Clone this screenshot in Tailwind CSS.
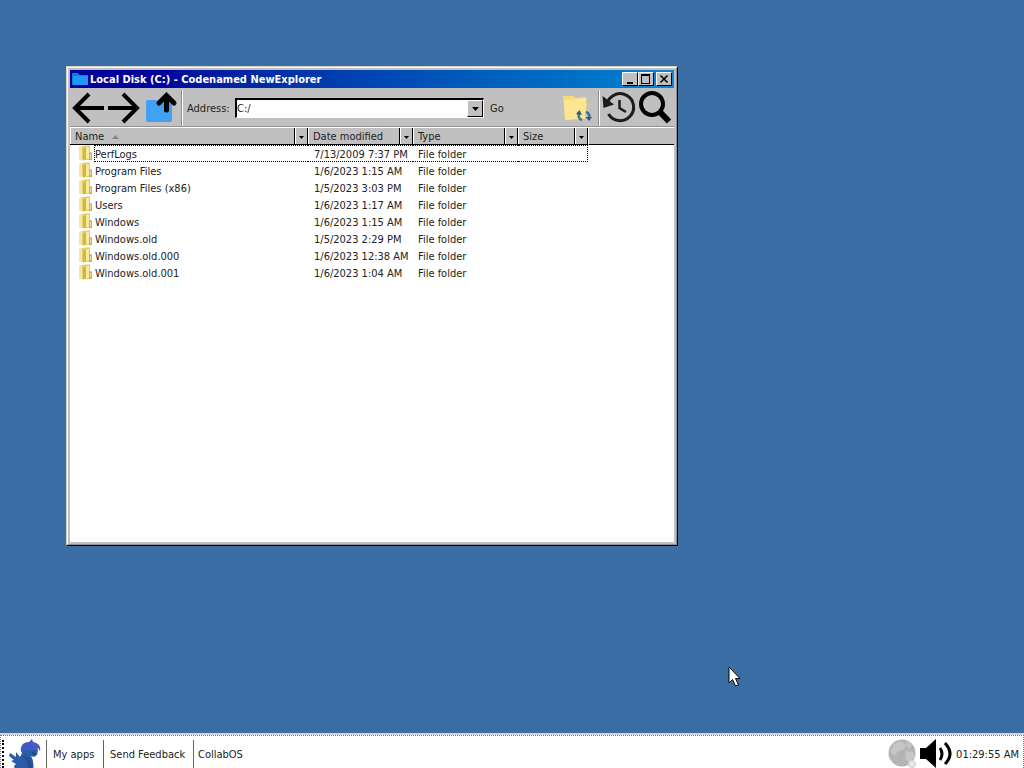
<!DOCTYPE html>
<html lang="en">
<head>
    <meta charset="UTF-8">
    <meta name="viewport" content="width=device-width, initial-scale=1.0">
    <title>Local Disk (C:) - Codenamed NewExplorer</title>
    <script src="https://cdn.jsdelivr.net/npm/@tailwindcss/browser@4"></script>
</head>
<body class="flex flex-col h-screen overflow-hidden bg-[#3a6ea5] font-['DejaVu_Sans_Condensed','DejaVu_Sans',sans-serif] text-[11px] leading-4 text-[#222]">

    <!-- Shared icons -->
    <svg class="hidden">
        <symbol id="folder" viewBox="0 0 16 16">
            <path d="M1 2l6-1.500h5V7l2 1v7H7l-6-.5z" fill="#e4ce68"/>
            <path d="M1 2l3-.8v13.500L1 14.500z" fill="#f1e7a6"/>
            <path d="M8 2h3v12H8z" fill="#f4eaa8"/>
            <path d="M5 4l3-2v12l-3 2z" fill="#d4b73c"/>
            <path d="M11 7.500h3V15h-3z" fill="#d0b24a"/>
            <path d="M12 9h1v4h-1z" fill="#efe09a"/>
        </symbol>
        <symbol id="caret" viewBox="0 0 7 4">
            <path d="M0 0h7L3.500 4z" fill="#000"/>
        </symbol>
    </svg>

    <!-- Desktop -->
    <main class="relative flex-1 min-h-0">

        <!-- Explorer window -->
        <section class="absolute left-[66px] top-[66px] w-[612px] h-[480px] border border-t-[#d4d0c8] border-l-[#d4d0c8] border-r-black border-b-black bg-[#c0c0c0]">
            <div class="flex flex-col h-full border border-t-white border-l-white border-r-[#909090] border-b-[#909090] p-[2px]">

                <!-- Title bar -->
                <header class="flex items-center h-[18px] shrink-0 px-[2px] bg-linear-to-r from-[#00009c] from-15% to-[#1084d0] text-white">
                    <svg class="w-4 h-4 mr-[2px]" viewBox="0 0 16 16">
                        <path d="M0 2h6l2 2h8v10H0z" fill="#1178dc"/>
                        <path d="M1 5h15v9H1z" fill="#2196f3"/>
                    </svg>
                    <h1 class="flex-1 pt-[2px] font-bold whitespace-nowrap">Local Disk (C:) - Codenamed NewExplorer</h1>
                    <button aria-label="Minimize" class="w-4 h-[14px] bg-[#c0c0c0] border border-t-white border-l-white border-r-black border-b-black">
                        <svg class="w-[14px] h-3" viewBox="0 0 14 12"><path d="M4 9h6v2H4z"/></svg>
                    </button>
                    <button aria-label="Maximize" class="w-4 h-[14px] bg-[#c0c0c0] border border-t-white border-l-white border-r-black border-b-black">
                        <svg class="w-[14px] h-3" viewBox="0 0 14 12"><path d="M2 1h9v10H2zM3 3v7h7V3z" fill-rule="evenodd"/></svg>
                    </button>
                    <button aria-label="Close" class="w-4 h-[14px] ml-[2px] bg-[#c0c0c0] border border-t-white border-l-white border-r-black border-b-black">
                        <svg class="w-[14px] h-3" viewBox="0 0 14 12"><path d="M3.500 2.500l7 7M10.500 2.500l-7 7" stroke="#000" stroke-width="1.600"/></svg>
                    </button>
                </header>

                <!-- Toolbar -->
                <div class="flex items-center h-[39px] pt-[2px] shrink-0 border-b border-[#909090]">
                    <button aria-label="Back" class="w-9 h-9 pl-[2px]">
                        <svg class="w-[34px] h-9" viewBox="0 0 34 36" fill="none" stroke="#000" stroke-width="4"><path d="M17 4L3 18l14 14M3 18h29"/></svg>
                    </button>
                    <button aria-label="Forward" class="w-9 h-9">
                        <svg class="w-[34px] h-9" viewBox="0 0 34 36" fill="none" stroke="#000" stroke-width="4"><path d="M17 4l14 14-14 14M31 18H2"/></svg>
                    </button>
                    <button aria-label="Up one level" class="w-9 h-9 ml-[2px]">
                        <svg class="w-9 h-9" viewBox="0 0 36 36">
                            <path d="M2 12q0-2 2-2h8l3 2h13v18q0 2-2 2H4q-2 0-2-2z" fill="#42a0f5"/>
                            <path d="M15 13l7.500-7.500L30 13M22.500 6v14" fill="none" stroke="#000" stroke-width="5" stroke-linecap="round"/>
                        </svg>
                    </button>
                    <div class="w-[2px] h-9 ml-[1px] border-l border-l-[#909090] border-r border-r-white"></div>
                    <label for="address" class="ml-1 w-12 pt-[1px] whitespace-nowrap">Address:</label>
                    <div class="flex w-[249px] h-5 bg-white border-t-2 border-l-2 border-t-black border-l-black border-r border-b border-r-white border-b-white">
                        <input id="address" type="text" value="C:/" class="flex-1 min-w-0 outline-none">
                        <button aria-label="Show addresses" class="flex items-center justify-center w-4 bg-[#c0c0c0] border border-t-white border-l-white border-r-black border-b-black">
                            <svg class="w-[7px] h-1"><use href="#caret"/></svg>
                        </button>
                    </div>
                    <button class="ml-[6px] pt-[1px]">Go</button>
                    <button aria-label="Refresh" class="w-8 h-8 ml-auto mr-[6px]">
                        <svg class="w-8 h-8" viewBox="0 0 32 32">
                            <path d="M3 4h11l2 2 10-1 1 8-2 14-20 1z" fill="#f3dc78"/>
                            <path d="M4 8l22-2-1 20-20 2z" fill="#fae694"/>
                            <path d="M22 28c-3-1-4-4-3-7M26 20c3 1 4 4 3 6" fill="none" stroke="#3d6c96" stroke-width="2.500"/>
                            <path d="M16 22l3.500-4 2.500 5zM32 25l-3 4-3.500-4z" fill="#2d5c8a"/>
                        </svg>
                    </button>
                    <div class="w-[2px] h-9 border-l border-l-[#909090] border-r border-r-white"></div>
                    <button aria-label="History" class="w-9 h-9 ml-[2px]">
                        <svg class="w-9 h-9" viewBox="0 0 36 36" fill="none" stroke="#1c1c1c">
                            <path d="M5 14A13.500 13.500 0 1 1 6.500 24" stroke-width="3"/>
                            <path d="M.5 6l1 12L12 14.500z" fill="#1c1c1c" stroke="none"/>
                            <path d="M17.500 10v8l6.500 4" stroke-width="2.500"/>
                        </svg>
                    </button>
                    <button aria-label="Search" class="w-9 h-9">
                        <svg class="w-9 h-9" viewBox="0 0 36 36" fill="none" stroke="#000">
                            <circle cx="14" cy="14" r="11" stroke-width="4"/>
                            <path d="M21 21L31 31.500" stroke-width="6"/>
                        </svg>
                    </button>
                </div>

                <!-- File list -->
                <div class="flex-1 min-h-0 bg-white">
                    <table class="w-full table-fixed border-collapse text-left whitespace-nowrap">
                        <colgroup>
                            <col class="w-[238px]">
                            <col class="w-[105px]">
                            <col class="w-[105px]">
                            <col class="w-[70px]">
                            <col>
                        </colgroup>
                        <thead class="bg-[#c0c0c0]">
                            <tr class="h-[18px]">
                                <th class="p-0 font-normal">
                                    <div class="flex h-[18px] border-t border-t-white border-b border-b-black">
                                        <span class="flex flex-1 items-center gap-2 pl-1 pt-[2px] border-l border-l-white border-r border-r-black">Name
                                            <svg class="w-[7px] h-1" viewBox="0 0 7 4"><path d="M0 4h7L3.500 0z" fill="#888"/></svg>
                                        </span>
                                        <button aria-label="Filter by name" class="flex items-center justify-center w-[13px] pt-[2px] border-l border-l-white border-r border-r-black"><svg class="w-[5px] h-[3px]"><use href="#caret"/></svg></button>
                                    </div>
                                </th>
                                <th class="p-0 font-normal">
                                    <div class="flex h-[18px] border-t border-t-white border-b border-b-black">
                                        <span class="flex flex-1 items-center pl-1 pt-[2px] border-l border-l-white border-r border-r-black">Date modified</span>
                                        <button aria-label="Filter by date" class="flex items-center justify-center w-[13px] pt-[2px] border-l border-l-white border-r border-r-black"><svg class="w-[5px] h-[3px]"><use href="#caret"/></svg></button>
                                    </div>
                                </th>
                                <th class="p-0 font-normal">
                                    <div class="flex h-[18px] border-t border-t-white border-b border-b-black">
                                        <span class="flex flex-1 items-center pl-1 pt-[2px] border-l border-l-white border-r border-r-black">Type</span>
                                        <button aria-label="Filter by type" class="flex items-center justify-center w-[13px] pt-[2px] border-l border-l-white border-r border-r-black"><svg class="w-[5px] h-[3px]"><use href="#caret"/></svg></button>
                                    </div>
                                </th>
                                <th class="p-0 font-normal">
                                    <div class="flex h-[18px] border-t border-t-white border-b border-b-black">
                                        <span class="flex flex-1 items-center pl-1 pt-[2px] border-l border-l-white border-r border-r-black">Size</span>
                                        <button aria-label="Filter by size" class="flex items-center justify-center w-[13px] pt-[2px] border-l border-l-white border-r border-r-black"><svg class="w-[5px] h-[3px]"><use href="#caret"/></svg></button>
                                    </div>
                                </th>
                                <td class="p-0"><div class="h-[18px] border-t border-t-white border-l border-l-white border-b border-b-black"></div></td>
                            </tr>
                        </thead>
                        <tbody class="leading-[17px]">
                            <tr class="h-[17px]">
                                <td class="p-0 pl-2"><div class="flex h-[17px]"><svg class="w-4 h-4"><use href="#folder"/></svg><span class="flex-1 h-[17px] border-y border-l border-dotted border-black">PerfLogs</span></div></td>
                                <td class="p-0"><div class="h-[17px] pl-[6px] border-y border-dotted border-black">7/13/2009 7:37 PM</div></td>
                                <td class="p-0"><div class="h-[17px] pl-[5px] border-y border-dotted border-black">File folder</div></td>
                                <td class="p-0"><div class="h-[17px] border-y border-r border-dotted border-black"></div></td>
                                <td></td>
                            </tr>
                            <tr class="h-[17px]">
                                <td class="p-0 pl-2"><div class="flex h-[17px] leading-[19px]"><svg class="w-4 h-4 mr-[1px]"><use href="#folder"/></svg>Program Files</div></td>
                                <td class="p-0 pl-[6px]"><div class="h-[17px] leading-[19px]">1/6/2023 1:15 AM</div></td>
                                <td class="p-0 pl-[5px]"><div class="h-[17px] leading-[19px]">File folder</div></td>
                                <td></td><td></td>
                            </tr>
                            <tr class="h-[17px]">
                                <td class="p-0 pl-2"><div class="flex h-[17px] leading-[19px]"><svg class="w-4 h-4 mr-[1px]"><use href="#folder"/></svg>Program Files (x86)</div></td>
                                <td class="p-0 pl-[6px]"><div class="h-[17px] leading-[19px]">1/5/2023 3:03 PM</div></td>
                                <td class="p-0 pl-[5px]"><div class="h-[17px] leading-[19px]">File folder</div></td>
                                <td></td><td></td>
                            </tr>
                            <tr class="h-[17px]">
                                <td class="p-0 pl-2"><div class="flex h-[17px] leading-[19px]"><svg class="w-4 h-4 mr-[1px]"><use href="#folder"/></svg>Users</div></td>
                                <td class="p-0 pl-[6px]"><div class="h-[17px] leading-[19px]">1/6/2023 1:17 AM</div></td>
                                <td class="p-0 pl-[5px]"><div class="h-[17px] leading-[19px]">File folder</div></td>
                                <td></td><td></td>
                            </tr>
                            <tr class="h-[17px]">
                                <td class="p-0 pl-2"><div class="flex h-[17px] leading-[19px]"><svg class="w-4 h-4 mr-[1px]"><use href="#folder"/></svg>Windows</div></td>
                                <td class="p-0 pl-[6px]"><div class="h-[17px] leading-[19px]">1/6/2023 1:15 AM</div></td>
                                <td class="p-0 pl-[5px]"><div class="h-[17px] leading-[19px]">File folder</div></td>
                                <td></td><td></td>
                            </tr>
                            <tr class="h-[17px]">
                                <td class="p-0 pl-2"><div class="flex h-[17px] leading-[19px]"><svg class="w-4 h-4 mr-[1px]"><use href="#folder"/></svg>Windows.old</div></td>
                                <td class="p-0 pl-[6px]"><div class="h-[17px] leading-[19px]">1/5/2023 2:29 PM</div></td>
                                <td class="p-0 pl-[5px]"><div class="h-[17px] leading-[19px]">File folder</div></td>
                                <td></td><td></td>
                            </tr>
                            <tr class="h-[17px]">
                                <td class="p-0 pl-2"><div class="flex h-[17px] leading-[19px]"><svg class="w-4 h-4 mr-[1px]"><use href="#folder"/></svg>Windows.old.000</div></td>
                                <td class="p-0 pl-[6px]"><div class="h-[17px] leading-[19px]">1/6/2023 12:38 AM</div></td>
                                <td class="p-0 pl-[5px]"><div class="h-[17px] leading-[19px]">File folder</div></td>
                                <td></td><td></td>
                            </tr>
                            <tr class="h-[17px]">
                                <td class="p-0 pl-2"><div class="flex h-[17px] leading-[19px]"><svg class="w-4 h-4 mr-[1px]"><use href="#folder"/></svg>Windows.old.001</div></td>
                                <td class="p-0 pl-[6px]"><div class="h-[17px] leading-[19px]">1/6/2023 1:04 AM</div></td>
                                <td class="p-0 pl-[5px]"><div class="h-[17px] leading-[19px]">File folder</div></td>
                                <td></td><td></td>
                            </tr>
                        </tbody>
                    </table>
                </div>
            </div>
        </section>

        <!-- Mouse pointer -->
        <svg class="absolute left-[728px] top-[666px] w-[14px] h-[22px]" viewBox="0 0 14 22">
            <path d="M1 1v16l3.500-3.500L7.500 20l3-1.200-3-6.300H12z" fill="#fff" stroke="#000"/>
        </svg>
    </main>

    <!-- Taskbar -->
    <footer class="h-[35px] shrink-0 border-t-2 border-t-[#d0d4dc] bg-white">
        <div class="flex items-center h-full pt-1 border-t border-x border-dotted border-[#777]">
            <div class="h-7 ml-[1px] border-l-2 border-dotted border-black"></div>
            <button aria-label="Start" class="w-[34px] h-8 ml-[5px] mr-[3px]">
                <svg class="w-[34px] h-8" viewBox="0 0 34 32">
                    <path d="M6 32l-1-4 2-2-5-3 3-1-5-4 1-3 6 4v-5l4 5 2-4c-1-4 0-7 3-9h9l4 6-1 5-3 2-3-1c2 3 3 8 2 14z" fill="#2a5ca8"/>
                    <path d="M12 14c-1-6 2-10 8-10l3-3 1 3c5 1 8 4 7 9l-2-3c-1 2-3 3-5 2-4-1-7 1-12 2z" fill="#3f5cc0"/>
                    <path d="M24 4c5 1 8 4 7 9-1-4-4-6-8-7z" fill="#6a50c8"/>
                    <path d="M12 18c5 2 8 7 6 14h6c1-6-2-11-7-14z" fill="#234f8e"/>
                    <path d="M23 14l3 1 1 2-3-1z" fill="#1e3566"/>
                </svg>
            </button>
            <nav class="flex items-center h-7">
                <a href="#" class="flex items-center h-7 pl-[6px] pt-[2px] w-[57px] border-l border-[#666] whitespace-nowrap">My apps</a>
                <a href="#" class="flex items-center h-7 pl-[6px] pt-[2px] w-[90px] border-l border-[#666] whitespace-nowrap">Send Feedback</a>
                <a href="#" class="flex items-center h-7 pl-1 pt-[2px] border-l border-[#666] whitespace-nowrap">CollabOS</a>
            </nav>
            <div class="flex items-center ml-auto pr-1">
                <button aria-label="Network" class="w-8 h-8">
                    <svg class="w-8 h-8" viewBox="0 0 32 32">
                        <circle cx="14" cy="15" r="13.500" fill="#b4b4b4"/>
                        <path d="M6 6l7-3 5 4-3 5-5 1-3 5-5-4zM18 13l7 1 2 5-6 6-4-5z" fill="#c6c6c6"/>
                        <path d="M19 3l5 3-2 5-4-3z" fill="#c2c2c2"/>
                        <circle cx="24" cy="26" r="3.500" fill="#e8e8e8" stroke="#ccc"/>
                    </svg>
                </button>
                <button aria-label="Volume" class="w-9 h-8">
                    <svg class="w-9 h-8" viewBox="0 0 36 32">
                        <path d="M0 10h6l10-9v29L6 21H0z" fill="#000"/>
                        <path d="M20 10q4 6 0 12M25 5q10 11 0 21" fill="none" stroke="#000" stroke-width="3"/>
                    </svg>
                </button>
                <time class="pt-[2px] whitespace-nowrap">01:29:55 AM</time>
            </div>
        </div>
    </footer>
</body>
</html>
